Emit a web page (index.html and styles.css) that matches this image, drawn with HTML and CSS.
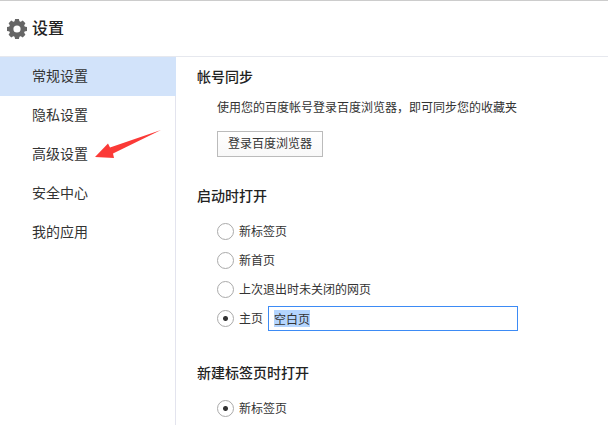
FILE: index.html
```html
<!DOCTYPE html>
<html lang="zh-CN">
<head>
<meta charset="utf-8">
<title>设置</title>
<link rel="stylesheet" href="styles.css">
</head>
<body>
<header class="header">
  <svg class="gear" viewBox="-10 -10 20 20" aria-hidden="true">
    <g fill="#666">
      <path fill-rule="evenodd" d="M0-8A8 8 0 1 1 0 8A8 8 0 1 1 0-8ZM0-3.6A3.6 3.6 0 1 0 0 3.6A3.6 3.6 0 1 0 0-3.6Z"/>
      <path id="teeth" d="M-2.6-7L-1.9-10H1.9L2.6-7ZM-2.6 7L-1.9 10H1.9L2.6 7ZM-7-2.6L-10-1.9V1.9L-7 2.6ZM7-2.6L10-1.9V1.9L7 2.6Z"/>
      <use href="#teeth" transform="rotate(45)"/>
    </g>
  </svg>
  <h1 class="title">设置</h1>
</header>
<div class="layout">
  <nav class="sidebar">
    <a class="nav-item nav-item-active" href="#general">常规设置</a>
    <a class="nav-item" href="#privacy">隐私设置</a>
    <a class="nav-item" href="#advanced">高级设置
      <svg class="arrow" viewBox="0 0 68 32" aria-hidden="true"><path fill="#fb3a37" d="M0 27L13 13.5L15 17.5L66 0L18 23.5L19 28Z"/></svg>
    </a>
    <a class="nav-item" href="#security">安全中心</a>
    <a class="nav-item" href="#apps">我的应用</a>
  </nav>
  <main class="content">
    <section class="section">
      <h2 class="heading">帐号同步</h2>
      <div class="body">
        <p class="text">使用您的百度帐号登录百度浏览器，即可同步您的收藏夹</p>
        <button class="button" type="button">登录百度浏览器</button>
      </div>
    </section>
    <section class="section">
      <h2 class="heading">启动时打开</h2>
      <div class="body options">
        <div class="row"><input class="radio" type="radio" name="startup" id="s1"><label for="s1">新标签页</label></div>
        <div class="row"><input class="radio" type="radio" name="startup" id="s2"><label for="s2">新首页</label></div>
        <div class="row"><input class="radio" type="radio" name="startup" id="s3"><label for="s3">上次退出时未关闭的网页</label></div>
        <div class="row"><input class="radio" type="radio" name="startup" id="s4" checked><label for="s4">主页</label><input class="field" id="homepage" type="text" value="空白页" aria-label="主页"></div>
      </div>
    </section>
    <section class="section">
      <h2 class="heading">新建标签页时打开</h2>
      <div class="body options">
        <div class="row"><input class="radio" type="radio" name="newtab" id="n1" checked><label for="n1">新标签页</label></div>
      </div>
    </section>
  </main>
</div>
<script src="script.js"></script>
</body>
</html>
```
FILE: script.js
```js
const homepage = document.getElementById("homepage");
homepage.focus();
homepage.select();
```
FILE: styles.css
```css
* {
  box-sizing: border-box;
}

body {
  display: flex;
  flex-direction: column;
  min-height: 100vh;
  margin: 0;
  background: #fff;
  color: #333;
  font: 12px/20px "Liberation Sans", "Noto Sans CJK SC", sans-serif;
}

h1,
h2,
p {
  margin: 0;
}

.header {
  display: flex;
  align-items: center;
  gap: 5px;
  height: 57px;
  padding-left: 7px;
  border-top: 1px solid #ccc;
  border-bottom: 1px solid #e6e8ee;
}

.gear {
  width: 20px;
  height: 20px;
}

.title {
  color: #222;
  font-size: 16px;
  font-weight: 500;
}

.layout {
  display: flex;
  flex: 1;
}

.sidebar {
  flex: none;
  width: 176px;
  border-right: 1px solid #e3e4ee;
}

.nav-item {
  position: relative;
  display: block;
  padding-left: 32px;
  color: #333;
  font-size: 14px;
  line-height: 39px;
  text-decoration: none;
}

.nav-item-active {
  margin-right: -1px;
  background: #d2e3fa;
}

.arrow {
  position: absolute;
  top: -5px;
  left: 95px;
  width: 68px;
  height: 32px;
}

.content {
  flex: 1;
  padding: 10px 20px 0 21px;
}

.section + .section {
  margin-top: 29px;
}

.heading {
  margin-bottom: 11px;
  color: #222;
  font-size: 14px;
  font-weight: 500;
}

.body {
  padding-left: 20px;
}

.options {
  padding-bottom: 1px;
}

.button {
  height: 26px;
  margin-top: 13px;
  padding: 0 10px;
  border: 1px solid #bbb;
  background: linear-gradient(#fff, #f8f8f8);
  color: #333;
  font: inherit;
  display: block;
}

.row {
  display: flex;
  align-items: center;
  gap: 5px;
  height: 29px;
}

.radio {
  flex: none;
  width: 17px;
  height: 17px;
  margin: 0;
  border: 1px solid #aaa;
  border-radius: 50%;
  appearance: none;
  background: #fff;
}

.radio:checked {
  background: radial-gradient(circle, #333 2px, #fff 3px);
}

.field {
  width: 250px;
  height: 25px;
  padding: 0 5px;
  border: 1px solid #3d8bf5;
  outline: none;
  color: #333;
  font: inherit;
  line-height: 14px;
}

.field::selection {
  background: #b4d5fe;
  color: #333;
}
```
